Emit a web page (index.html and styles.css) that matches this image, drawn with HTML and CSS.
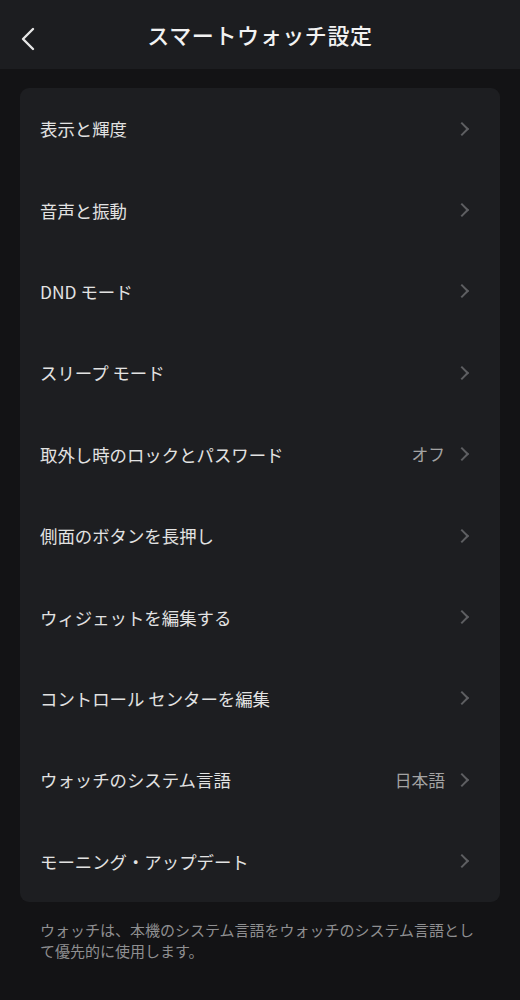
FILE: index.html
```html
<!DOCTYPE html>
<html lang="ja">
<head>
    <meta charset="UTF-8">
    <meta name="viewport" content="width=device-width, initial-scale=1.0">
    <title>スマートウォッチ設定</title>
    <link rel="stylesheet" href="styles.css">
</head>
<body>
    <header class="topbar">
        <button class="back-btn" aria-label="戻る">
            <svg width="16" height="24" viewBox="0 0 16 24" fill="none" stroke="#e6e6e6" stroke-width="2.4" stroke-linecap="round" stroke-linejoin="round">
                <path d="M13 2 L3 12 L13 22"/>
            </svg>
        </button>
        <h1 class="title">スマートウォッチ設定</h1>
    </header>

    <main class="content">
        <div class="settings-card">
            <div class="row"><span class="label">表示と輝度</span><span class="chev"></span></div>
            <div class="row"><span class="label">音声と振動</span><span class="chev"></span></div>
            <div class="row"><span class="label">DND モード</span><span class="chev"></span></div>
            <div class="row"><span class="label">スリープ モード</span><span class="chev"></span></div>
            <div class="row"><span class="label">取外し時のロックとパスワード</span><span class="value">オフ</span><span class="chev"></span></div>
            <div class="row"><span class="label">側面のボタンを長押し</span><span class="chev"></span></div>
            <div class="row"><span class="label">ウィジェットを編集する</span><span class="chev"></span></div>
            <div class="row"><span class="label">コントロール センターを編集</span><span class="chev"></span></div>
            <div class="row"><span class="label">ウォッチのシステム言語</span><span class="value">日本語</span><span class="chev"></span></div>
            <div class="row"><span class="label">モーニング・アップデート</span><span class="chev"></span></div>
        </div>

        <p class="note">ウォッチは、本機のシステム言語をウォッチのシステム言語として優先的に使用します。</p>
    </main>
</body>
</html>
```

FILE: styles.css
```css
body {
    margin: 0;
    background-color: #131315;
    color: #e8e8e8;
    font-family: "Noto Sans CJK JP", "Noto Sans", sans-serif;
}
.topbar {
    height: 69px;
    background-color: #1c1d20;
    display: flex;
    align-items: center;
    justify-content: center;
    position: relative;
}
.back-btn {
    position: absolute;
    left: 20px;
    top: 27px;
    background: none;
    border: none;
    padding: 0;
    cursor: pointer;
    display: flex;
}
.title {
    margin: 0;
    font-size: 22px;
    font-weight: 500;
    color: #f2f2f2;
    letter-spacing: 0.6px;
    margin-top: -2px;
}
.content {
    padding: 19px 20px 0;
}
.settings-card {
    background-color: #1d1e21;
    border-radius: 9px;
    display: flex;
    flex-direction: column;
}
.row {
    height: 81.4px;
    display: flex;
    align-items: center;
    padding: 0 31px 0 20px;
    box-sizing: border-box;
}
.label {
    flex: 1;
    font-size: 17.4px;
    font-weight: 400;
    color: #e2e2e2;
}
.value {
    font-size: 16.8px;
    color: #a3a3a3;
    margin-right: 12px;
}
.chev {
    width: 8px;
    height: 8px;
    border-top: 2px solid #5e5f62;
    border-right: 2px solid #5e5f62;
    transform: rotate(45deg);
    margin-right: 2px;
}
.note {
    margin: 17px 22px 0 20px;
    font-size: 15px;
    line-height: 21px;
    color: #8f8f91;
}
```
